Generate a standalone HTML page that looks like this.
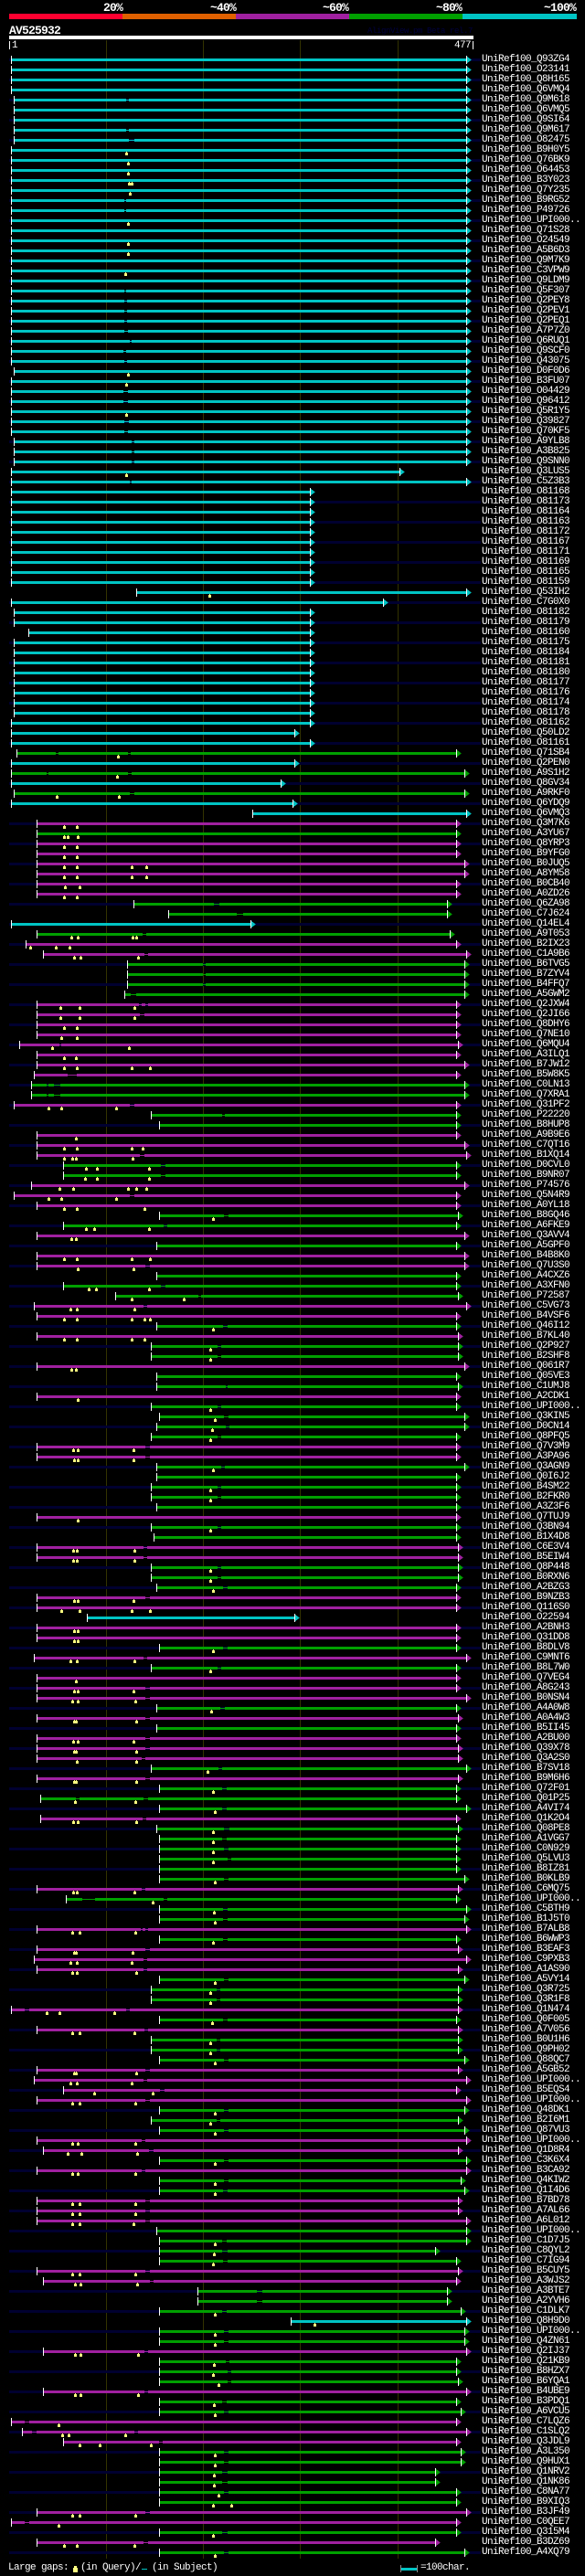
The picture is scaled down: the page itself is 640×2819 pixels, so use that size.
<!DOCTYPE html>
<html><head><meta charset="utf-8"><title>AV525932</title>
<style>
html,body{margin:0;padding:0;background:#000}
body{position:relative;width:640px;height:2819px;overflow:hidden;color:#fff;font-family:"Liberation Mono",monospace}
.t{position:absolute;white-space:pre;line-height:11px}
.b{font-weight:bold;font-size:13px;letter-spacing:-.8px}
.n{font-size:11px;letter-spacing:-.6px}
.r{position:absolute}
#grid{position:absolute;left:10px;top:64px;width:516px;height:2731px;background:linear-gradient(#000030 3px,transparent 3px) 0 0/100% 22px}
#rows{position:absolute;left:0;top:61px;width:640px}
svg{display:block;width:640px;height:11px;overflow:visible;shape-rendering:crispEdges}
path{fill:currentColor}
.c{color:#00c4c4}.g{color:#00a000}.p{color:#a020a0}
path.w{fill:none;stroke:#fff;stroke-width:1}
path.y{fill:#ffff80}
pre{position:absolute;margin:0;left:527px;top:60px;font:11px/11px "Liberation Mono",monospace;letter-spacing:-.6px;color:#fff}
</style></head><body>
<div class="t b" style="left:113px;top:3px">20%</div>
<div class="t b" style="left:230px;top:3px">~40%</div>
<div class="t b" style="left:353px;top:3px">~60%</div>
<div class="t b" style="left:477px;top:3px">~80%</div>
<div class="t b" style="left:595px;top:3px">~100%</div>
<div class="r" style="left:10px;top:15px;width:124px;height:6px;background:#ff0030"></div>
<div class="r" style="left:134px;top:15px;width:124px;height:6px;background:#e06000"></div>
<div class="r" style="left:258px;top:15px;width:124px;height:6px;background:#a020a0"></div>
<div class="r" style="left:382px;top:15px;width:124px;height:6px;background:#00a000"></div>
<div class="r" style="left:506px;top:15px;width:125px;height:6px;background:#00c4c4"></div>
<div class="t b" style="left:10px;top:28px">AV525932</div>
<div class="t" style="left:402px;top:29px;font-size:9px;letter-spacing:-.4px;color:#000040">AlignView.pm Beta rel.7</div>
<div class="r" style="left:10px;top:39px;width:508px;height:4px;background:#fff"></div>
<div class="r" style="left:10px;top:45px;width:1px;height:9px;background:#fff"></div>
<div class="r" style="left:517px;top:45px;width:1px;height:9px;background:#fff"></div>
<div class="t n" style="left:13px;top:45px">1</div>
<div class="t n" style="left:497px;top:45px">477</div>
<div class="r" style="left:116px;top:44px;width:1px;height:2756px;background:#333300"></div>
<div class="r" style="left:222px;top:44px;width:1px;height:2756px;background:#333300"></div>
<div class="r" style="left:328px;top:44px;width:1px;height:2756px;background:#333300"></div>
<div class="r" style="left:435px;top:44px;width:1px;height:2756px;background:#333300"></div>
<div id="grid"></div>
<div id="rows">
<svg class=c><path d="M13 3H511V1l5 3.5-5 3.5V6H13z"/><path class=w d="M12.5 0v9M510.5 0v9"/></svg>
<svg class=c><path d="M13 3H511V1l5 3.5-5 3.5V6H13z"/><path class=w d="M12.5 0v9M510.5 0v9"/></svg>
<svg class=c><path d="M13 3H511V1l5 3.5-5 3.5V6H13z"/><path class=w d="M12.5 0v9M510.5 0v9"/></svg>
<svg class=c><path d="M13 3H511V1l5 3.5-5 3.5V6H13z"/><path class=w d="M12.5 0v9M510.5 0v9"/></svg>
<svg class=c><path d="M16 3H138V4H141V3H511V1l5 3.5-5 3.5V6H141V5H138V6H16z"/><path class=w d="M15.5 0v9M510.5 0v9"/></svg>
<svg class=c><path d="M16 3H511V1l5 3.5-5 3.5V6H16z"/><path class=w d="M15.5 0v9M510.5 0v9"/></svg>
<svg class=c><path d="M16 3H511V1l5 3.5-5 3.5V6H16z"/><path class=w d="M15.5 0v9M510.5 0v9"/></svg>
<svg class=c><path d="M16 3H138V4H141V3H511V1l5 3.5-5 3.5V6H141V5H138V6H16z"/><path class=w d="M15.5 0v9M510.5 0v9"/></svg>
<svg class=c><path d="M16 3H141V4H147V3H511V1l5 3.5-5 3.5V6H147V5H141V6H16z"/><path class=w d="M15.5 0v9M510.5 0v9"/></svg>
<svg class=c><path d="M13 3H511V1l5 3.5-5 3.5V6H13z"/><path class=w d="M12.5 0v9M510.5 0v9"/><path class=y d="M137 10h3V7h-1V6h-1v1h-1z"/></svg>
<svg class=c><path d="M13 3H511V1l5 3.5-5 3.5V6H13z"/><path class=w d="M12.5 0v9M510.5 0v9"/><path class=y d="M139 10h3V7h-1V6h-1v1h-1z"/></svg>
<svg class=c><path d="M13 3H511V1l5 3.5-5 3.5V6H13z"/><path class=w d="M12.5 0v9M510.5 0v9"/><path class=y d="M139 10h3V7h-1V6h-1v1h-1z"/></svg>
<svg class=c><path d="M13 3H511V1l5 3.5-5 3.5V6H13z"/><path class=w d="M12.5 0v9M510.5 0v9"/><path class=y d="M140 10h3V7h-1V6h-1v1h-1zM143 10h3V7h-1V6h-1v1h-1z"/></svg>
<svg class=c><path d="M13 3H511V1l5 3.5-5 3.5V6H13z"/><path class=w d="M12.5 0v9M510.5 0v9"/><path class=y d="M141 10h3V7h-1V6h-1v1h-1z"/></svg>
<svg class=c><path d="M13 3H136V4H138V3H511V1l5 3.5-5 3.5V6H138V5H136V6H13z"/><path class=w d="M12.5 0v9M510.5 0v9"/></svg>
<svg class=c><path d="M13 3H136V4H138V3H511V1l5 3.5-5 3.5V6H138V5H136V6H13z"/><path class=w d="M12.5 0v9M510.5 0v9"/></svg>
<svg class=c><path d="M13 3H511V1l5 3.5-5 3.5V6H13z"/><path class=w d="M12.5 0v9M510.5 0v9"/><path class=y d="M139 10h3V7h-1V6h-1v1h-1z"/></svg>
<svg class=c><path d="M13 3H511V1l5 3.5-5 3.5V6H13z"/><path class=w d="M12.5 0v9M510.5 0v9"/></svg>
<svg class=c><path d="M13 3H511V1l5 3.5-5 3.5V6H13z"/><path class=w d="M12.5 0v9M510.5 0v9"/><path class=y d="M139 10h3V7h-1V6h-1v1h-1z"/></svg>
<svg class=c><path d="M13 3H511V1l5 3.5-5 3.5V6H13z"/><path class=w d="M12.5 0v9M510.5 0v9"/><path class=y d="M139 10h3V7h-1V6h-1v1h-1z"/></svg>
<svg class=c><path d="M13 3H511V1l5 3.5-5 3.5V6H13z"/><path class=w d="M12.5 0v9M510.5 0v9"/></svg>
<svg class=c><path d="M13 3H511V1l5 3.5-5 3.5V6H13z"/><path class=w d="M12.5 0v9M510.5 0v9"/><path class=y d="M136 10h3V7h-1V6h-1v1h-1z"/></svg>
<svg class=c><path d="M13 3H511V1l5 3.5-5 3.5V6H13z"/><path class=w d="M12.5 0v9M510.5 0v9"/></svg>
<svg class=c><path d="M13 3H136V4H138V3H511V1l5 3.5-5 3.5V6H138V5H136V6H13z"/><path class=w d="M12.5 0v9M510.5 0v9"/></svg>
<svg class=c><path d="M13 3H136V4H139V3H511V1l5 3.5-5 3.5V6H139V5H136V6H13z"/><path class=w d="M12.5 0v9M510.5 0v9"/></svg>
<svg class=c><path d="M13 3H136V4H139V3H511V1l5 3.5-5 3.5V6H139V5H136V6H13z"/><path class=w d="M12.5 0v9M510.5 0v9"/></svg>
<svg class=c><path d="M13 3H136V4H139V3H511V1l5 3.5-5 3.5V6H139V5H136V6H13z"/><path class=w d="M12.5 0v9M510.5 0v9"/></svg>
<svg class=c><path d="M13 3H136V4H140V3H511V1l5 3.5-5 3.5V6H140V5H136V6H13z"/><path class=w d="M12.5 0v9M510.5 0v9"/></svg>
<svg class=c><path d="M13 3H142V4H144V3H511V1l5 3.5-5 3.5V6H144V5H142V6H13z"/><path class=w d="M12.5 0v9M510.5 0v9"/></svg>
<svg class=c><path d="M13 3H135V4H138V3H511V1l5 3.5-5 3.5V6H138V5H135V6H13z"/><path class=w d="M12.5 0v9M510.5 0v9"/></svg>
<svg class=c><path d="M13 3H136V4H139V3H511V1l5 3.5-5 3.5V6H139V5H136V6H13z"/><path class=w d="M12.5 0v9M510.5 0v9"/></svg>
<svg class=c><path d="M16 3H511V1l5 3.5-5 3.5V6H16z"/><path class=w d="M15.5 0v9M510.5 0v9"/><path class=y d="M139 10h3V7h-1V6h-1v1h-1z"/></svg>
<svg class=c><path d="M13 3H511V1l5 3.5-5 3.5V6H13z"/><path class=w d="M12.5 0v9M510.5 0v9"/><path class=y d="M137 10h3V7h-1V6h-1v1h-1z"/></svg>
<svg class=c><path d="M13 3H135V4H140V3H511V1l5 3.5-5 3.5V6H140V5H135V6H13z"/><path class=w d="M12.5 0v9M510.5 0v9"/></svg>
<svg class=c><path d="M13 3H135V4H140V3H511V1l5 3.5-5 3.5V6H140V5H135V6H13z"/><path class=w d="M12.5 0v9M510.5 0v9"/></svg>
<svg class=c><path d="M13 3H511V1l5 3.5-5 3.5V6H13z"/><path class=w d="M12.5 0v9M510.5 0v9"/><path class=y d="M137 10h3V7h-1V6h-1v1h-1z"/></svg>
<svg class=c><path d="M13 3H136V4H141V3H511V1l5 3.5-5 3.5V6H141V5H136V6H13z"/><path class=w d="M12.5 0v9M510.5 0v9"/></svg>
<svg class=c><path d="M13 3H136V4H140V3H511V1l5 3.5-5 3.5V6H140V5H136V6H13z"/><path class=w d="M12.5 0v9M510.5 0v9"/></svg>
<svg class=c><path d="M16 3H144V4H147V3H511V1l5 3.5-5 3.5V6H147V5H144V6H16z"/><path class=w d="M15.5 0v9M510.5 0v9"/></svg>
<svg class=c><path d="M16 3H144V4H147V3H511V1l5 3.5-5 3.5V6H147V5H144V6H16z"/><path class=w d="M15.5 0v9M510.5 0v9"/></svg>
<svg class=c><path d="M16 3H144V4H147V3H511V1l5 3.5-5 3.5V6H147V5H144V6H16z"/><path class=w d="M15.5 0v9M510.5 0v9"/></svg>
<svg class=c><path d="M13 3H438V1l5 3.5-5 3.5V6H13z"/><path class=w d="M12.5 0v9M437.5 0v9"/><path class=y d="M137 10h3V7h-1V6h-1v1h-1z"/></svg>
<svg class=c><path d="M13 3H142V4H144V3H511V1l5 3.5-5 3.5V6H144V5H142V6H13z"/><path class=w d="M12.5 0v9M510.5 0v9"/></svg>
<svg class=c><path d="M13 3H340V1l5 3.5-5 3.5V6H13z"/><path class=w d="M12.5 0v9M339.5 0v9"/></svg>
<svg class=c><path d="M13 3H340V1l5 3.5-5 3.5V6H13z"/><path class=w d="M12.5 0v9M339.5 0v9"/></svg>
<svg class=c><path d="M13 3H340V1l5 3.5-5 3.5V6H13z"/><path class=w d="M12.5 0v9M339.5 0v9"/></svg>
<svg class=c><path d="M13 3H340V1l5 3.5-5 3.5V6H13z"/><path class=w d="M12.5 0v9M339.5 0v9"/></svg>
<svg class=c><path d="M13 3H340V1l5 3.5-5 3.5V6H13z"/><path class=w d="M12.5 0v9M339.5 0v9"/></svg>
<svg class=c><path d="M13 3H340V1l5 3.5-5 3.5V6H13z"/><path class=w d="M12.5 0v9M339.5 0v9"/></svg>
<svg class=c><path d="M13 3H340V1l5 3.5-5 3.5V6H13z"/><path class=w d="M12.5 0v9M339.5 0v9"/></svg>
<svg class=c><path d="M13 3H340V1l5 3.5-5 3.5V6H13z"/><path class=w d="M12.5 0v9M339.5 0v9"/></svg>
<svg class=c><path d="M13 3H340V1l5 3.5-5 3.5V6H13z"/><path class=w d="M12.5 0v9M339.5 0v9"/></svg>
<svg class=c><path d="M13 3H340V1l5 3.5-5 3.5V6H13z"/><path class=w d="M12.5 0v9M339.5 0v9"/></svg>
<svg class=c><path d="M150 3H511V1l5 3.5-5 3.5V6H150z"/><path class=w d="M149.5 0v9M510.5 0v9"/><path class=y d="M228 10h3V7h-1V6h-1v1h-1z"/></svg>
<svg class=c><path d="M13 3H420V1l5 3.5-5 3.5V6H13z"/><path class=w d="M12.5 0v9M419.5 0v9"/></svg>
<svg class=c><path d="M16 3H340V1l5 3.5-5 3.5V6H16z"/><path class=w d="M15.5 0v9M339.5 0v9"/></svg>
<svg class=c><path d="M16 3H340V1l5 3.5-5 3.5V6H16z"/><path class=w d="M15.5 0v9M339.5 0v9"/></svg>
<svg class=c><path d="M32 3H340V1l5 3.5-5 3.5V6H32z"/><path class=w d="M31.5 0v9M339.5 0v9"/></svg>
<svg class=c><path d="M16 3H340V1l5 3.5-5 3.5V6H16z"/><path class=w d="M15.5 0v9M339.5 0v9"/></svg>
<svg class=c><path d="M16 3H340V1l5 3.5-5 3.5V6H16z"/><path class=w d="M15.5 0v9M339.5 0v9"/></svg>
<svg class=c><path d="M16 3H340V1l5 3.5-5 3.5V6H16z"/><path class=w d="M15.5 0v9M339.5 0v9"/></svg>
<svg class=c><path d="M16 3H340V1l5 3.5-5 3.5V6H16z"/><path class=w d="M15.5 0v9M339.5 0v9"/></svg>
<svg class=c><path d="M16 3H340V1l5 3.5-5 3.5V6H16z"/><path class=w d="M15.5 0v9M339.5 0v9"/></svg>
<svg class=c><path d="M16 3H340V1l5 3.5-5 3.5V6H16z"/><path class=w d="M15.5 0v9M339.5 0v9"/></svg>
<svg class=c><path d="M16 3H340V1l5 3.5-5 3.5V6H16z"/><path class=w d="M15.5 0v9M339.5 0v9"/></svg>
<svg class=c><path d="M16 3H340V1l5 3.5-5 3.5V6H16z"/><path class=w d="M15.5 0v9M339.5 0v9"/></svg>
<svg class=c><path d="M13 3H340V1l5 3.5-5 3.5V6H13z"/><path class=w d="M12.5 0v9M339.5 0v9"/></svg>
<svg class=c><path d="M13 3H323V1l5 3.5-5 3.5V6H13z"/><path class=w d="M12.5 0v9M322.5 0v9"/></svg>
<svg class=c><path d="M13 3H340V1l5 3.5-5 3.5V6H13z"/><path class=w d="M12.5 0v9M339.5 0v9"/></svg>
<svg class=g><path d="M19 3H61V4H64V3H140V4H143V3H500V1l5 3.5-5 3.5V6H143V5H140V6H64V5H61V6H19z"/><path class=w d="M18.5 0v9M499.5 0v9"/><path class=y d="M128 10h3V7h-1V6h-1v1h-1z"/></svg>
<svg class=c><path d="M13 3H323V1l5 3.5-5 3.5V6H13z"/><path class=w d="M12.5 0v9M322.5 0v9"/></svg>
<svg class=g><path d="M13 3H51V4H53V3H140V4H144V3H509V1l5 3.5-5 3.5V6H144V5H140V6H53V5H51V6H13z"/><path class=w d="M12.5 0v9M508.5 0v9"/><path class=y d="M127 10h3V7h-1V6h-1v1h-1z"/></svg>
<svg class=c><path d="M13 3H308V1l5 3.5-5 3.5V6H13z"/><path class=w d="M12.5 0v9M307.5 0v9"/></svg>
<svg class=g><path d="M16 3H142V4H147V3H509V1l5 3.5-5 3.5V6H147V5H142V6H16z"/><path class=w d="M15.5 0v9M508.5 0v9"/><path class=y d="M61 10h3V7h-1V6h-1v1h-1zM129 10h3V7h-1V6h-1v1h-1z"/></svg>
<svg class=c><path d="M13 3H321V1l5 3.5-5 3.5V6H13z"/><path class=w d="M12.5 0v9M320.5 0v9"/></svg>
<svg class=c><path d="M277 3H511V1l5 3.5-5 3.5V6H277z"/><path class=w d="M276.5 0v9M510.5 0v9"/></svg>
<svg class=p><path d="M41 3H500V1l5 3.5-5 3.5V6H41z"/><path class=w d="M40.5 0v9M499.5 0v9"/><path class=y d="M69 10h3V7h-1V6h-1v1h-1zM83 10h3V7h-1V6h-1v1h-1z"/></svg>
<svg class=g><path d="M41 3H500V1l5 3.5-5 3.5V6H41z"/><path class=w d="M40.5 0v9M499.5 0v9"/><path class=y d="M69 10h3V7h-1V6h-1v1h-1zM73 10h3V7h-1V6h-1v1h-1zM84 10h3V7h-1V6h-1v1h-1z"/></svg>
<svg class=p><path d="M41 3H500V1l5 3.5-5 3.5V6H41z"/><path class=w d="M40.5 0v9M499.5 0v9"/><path class=y d="M69 10h3V7h-1V6h-1v1h-1zM83 10h3V7h-1V6h-1v1h-1z"/></svg>
<svg class=p><path d="M41 3H500V1l5 3.5-5 3.5V6H41z"/><path class=w d="M40.5 0v9M499.5 0v9"/><path class=y d="M69 10h3V7h-1V6h-1v1h-1zM83 10h3V7h-1V6h-1v1h-1z"/></svg>
<svg class=p><path d="M41 3H509V1l5 3.5-5 3.5V6H41z"/><path class=w d="M40.5 0v9M508.5 0v9"/><path class=y d="M69 10h3V7h-1V6h-1v1h-1zM83 10h3V7h-1V6h-1v1h-1zM143 10h3V7h-1V6h-1v1h-1zM159 10h3V7h-1V6h-1v1h-1z"/></svg>
<svg class=p><path d="M41 3H509V1l5 3.5-5 3.5V6H41z"/><path class=w d="M40.5 0v9M508.5 0v9"/><path class=y d="M69 10h3V7h-1V6h-1v1h-1zM83 10h3V7h-1V6h-1v1h-1zM143 10h3V7h-1V6h-1v1h-1zM159 10h3V7h-1V6h-1v1h-1z"/></svg>
<svg class=p><path d="M41 3H500V1l5 3.5-5 3.5V6H41z"/><path class=w d="M40.5 0v9M499.5 0v9"/><path class=y d="M70 10h3V7h-1V6h-1v1h-1zM86 10h3V7h-1V6h-1v1h-1z"/></svg>
<svg class=p><path d="M41 3H500V1l5 3.5-5 3.5V6H41z"/><path class=w d="M40.5 0v9M499.5 0v9"/><path class=y d="M69 10h3V7h-1V6h-1v1h-1zM83 10h3V7h-1V6h-1v1h-1z"/></svg>
<svg class=g><path d="M147 3H234V4H240V3H490V1l5 3.5-5 3.5V6H240V5H234V6H147z"/><path class=w d="M146.5 0v9M489.5 0v9"/></svg>
<svg class=g><path d="M185 3H259V4H266V3H490V1l5 3.5-5 3.5V6H266V5H259V6H185z"/><path class=w d="M184.5 0v9M489.5 0v9"/></svg>
<svg class=c><path d="M13 3H275V1l5 3.5-5 3.5V6H13z"/><path class=w d="M12.5 0v9M274.5 0v9"/></svg>
<svg class=g><path d="M41 3H156V4H160V3H493V1l5 3.5-5 3.5V6H160V5H156V6H41z"/><path class=w d="M40.5 0v9M492.5 0v9"/><path class=y d="M77 10h3V7h-1V6h-1v1h-1zM84 10h3V7h-1V6h-1v1h-1zM144 10h3V7h-1V6h-1v1h-1zM148 10h3V7h-1V6h-1v1h-1z"/></svg>
<svg class=p><path d="M29 3H500V1l5 3.5-5 3.5V6H29z"/><path class=w d="M28.5 0v9M499.5 0v9"/><path class=y d="M32 10h3V7h-1V6h-1v1h-1zM60 10h3V7h-1V6h-1v1h-1zM75 10h3V7h-1V6h-1v1h-1z"/></svg>
<svg class=p><path d="M48 3H158V4H162V3H511V1l5 3.5-5 3.5V6H162V5H158V6H48z"/><path class=w d="M47.5 0v9M510.5 0v9"/><path class=y d="M80 10h3V7h-1V6h-1v1h-1zM87 10h3V7h-1V6h-1v1h-1zM150 10h3V7h-1V6h-1v1h-1z"/></svg>
<svg class=g><path d="M140 3H222V4H225V3H509V1l5 3.5-5 3.5V6H225V5H222V6H140z"/><path class=w d="M139.5 0v9M508.5 0v9"/></svg>
<svg class=g><path d="M140 3H222V4H225V3H509V1l5 3.5-5 3.5V6H225V5H222V6H140z"/><path class=w d="M139.5 0v9M508.5 0v9"/></svg>
<svg class=g><path d="M140 3H222V4H225V3H509V1l5 3.5-5 3.5V6H225V5H222V6H140z"/><path class=w d="M139.5 0v9M508.5 0v9"/></svg>
<svg class=g><path d="M137 3H143V4H149V3H509V1l5 3.5-5 3.5V6H149V5H143V6H137z"/><path class=w d="M136.5 0v9M508.5 0v9"/></svg>
<svg class=p><path d="M41 3H152V4H155V3H159V4H162V3H500V1l5 3.5-5 3.5V6H162V5H159V6H155V5H152V6H41z"/><path class=w d="M40.5 0v9M499.5 0v9"/><path class=y d="M65 10h3V7h-1V6h-1v1h-1zM86 10h3V7h-1V6h-1v1h-1zM146 10h3V7h-1V6h-1v1h-1z"/></svg>
<svg class=p><path d="M41 3H153V4H158V3H500V1l5 3.5-5 3.5V6H158V5H153V6H41z"/><path class=w d="M40.5 0v9M499.5 0v9"/><path class=y d="M65 10h3V7h-1V6h-1v1h-1zM86 10h3V7h-1V6h-1v1h-1zM146 10h3V7h-1V6h-1v1h-1z"/></svg>
<svg class=p><path d="M41 3H500V1l5 3.5-5 3.5V6H41z"/><path class=w d="M40.5 0v9M499.5 0v9"/><path class=y d="M69 10h3V7h-1V6h-1v1h-1zM83 10h3V7h-1V6h-1v1h-1z"/></svg>
<svg class=p><path d="M41 3H500V1l5 3.5-5 3.5V6H41z"/><path class=w d="M40.5 0v9M499.5 0v9"/><path class=y d="M66 10h3V7h-1V6h-1v1h-1zM83 10h3V7h-1V6h-1v1h-1z"/></svg>
<svg class=p><path d="M22 3H65V4H67V3H502V1l5 3.5-5 3.5V6H67V5H65V6H22z"/><path class=w d="M21.5 0v9M501.5 0v9"/><path class=y d="M56 10h3V7h-1V6h-1v1h-1zM140 10h3V7h-1V6h-1v1h-1z"/></svg>
<svg class=p><path d="M41 3H500V1l5 3.5-5 3.5V6H41z"/><path class=w d="M40.5 0v9M499.5 0v9"/><path class=y d="M69 10h3V7h-1V6h-1v1h-1zM82 10h3V7h-1V6h-1v1h-1z"/></svg>
<svg class=p><path d="M41 3H509V1l5 3.5-5 3.5V6H41z"/><path class=w d="M40.5 0v9M508.5 0v9"/><path class=y d="M69 10h3V7h-1V6h-1v1h-1zM83 10h3V7h-1V6h-1v1h-1zM143 10h3V7h-1V6h-1v1h-1zM163 10h3V7h-1V6h-1v1h-1z"/></svg>
<svg class=p><path d="M38 3H74V4H84V3H500V1l5 3.5-5 3.5V6H84V5H74V6H38z"/><path class=w d="M37.5 0v9M499.5 0v9"/></svg>
<svg class=g><path d="M35 3H51V4H53V3H59V4H66V3H509V1l5 3.5-5 3.5V6H66V5H59V6H53V5H51V6H35z"/><path class=w d="M34.5 0v9M508.5 0v9"/></svg>
<svg class=g><path d="M35 3H51V4H53V3H59V4H66V3H509V1l5 3.5-5 3.5V6H66V5H59V6H53V5H51V6H35z"/><path class=w d="M34.5 0v9M508.5 0v9"/></svg>
<svg class=p><path d="M16 3H142V4H147V3H500V1l5 3.5-5 3.5V6H147V5H142V6H16z"/><path class=w d="M15.5 0v9M499.5 0v9"/><path class=y d="M52 10h3V7h-1V6h-1v1h-1zM66 10h3V7h-1V6h-1v1h-1zM126 10h3V7h-1V6h-1v1h-1z"/></svg>
<svg class=g><path d="M166 3H243V4H246V3H500V1l5 3.5-5 3.5V6H246V5H243V6H166z"/><path class=w d="M165.5 0v9M499.5 0v9"/></svg>
<svg class=g><path d="M175 3H500V1l5 3.5-5 3.5V6H175z"/><path class=w d="M174.5 0v9M499.5 0v9"/></svg>
<svg class=p><path d="M41 3H500V1l5 3.5-5 3.5V6H41z"/><path class=w d="M40.5 0v9M499.5 0v9"/><path class=y d="M82 10h3V7h-1V6h-1v1h-1z"/></svg>
<svg class=p><path d="M41 3H509V1l5 3.5-5 3.5V6H41z"/><path class=w d="M40.5 0v9M508.5 0v9"/><path class=y d="M69 10h3V7h-1V6h-1v1h-1zM83 10h3V7h-1V6h-1v1h-1zM143 10h3V7h-1V6h-1v1h-1zM155 10h3V7h-1V6h-1v1h-1z"/></svg>
<svg class=p><path d="M41 3H153V4H158V3H511V1l5 3.5-5 3.5V6H158V5H153V6H41z"/><path class=w d="M40.5 0v9M510.5 0v9"/><path class=y d="M69 10h3V7h-1V6h-1v1h-1zM78 10h3V7h-1V6h-1v1h-1zM82 10h3V7h-1V6h-1v1h-1zM144 10h3V7h-1V6h-1v1h-1z"/></svg>
<svg class=g><path d="M70 3H176V4H181V3H500V1l5 3.5-5 3.5V6H181V5H176V6H70z"/><path class=w d="M69.5 0v9M499.5 0v9"/><path class=y d="M93 10h3V7h-1V6h-1v1h-1zM105 10h3V7h-1V6h-1v1h-1zM162 10h3V7h-1V6h-1v1h-1z"/></svg>
<svg class=g><path d="M70 3H176V4H181V3H500V1l5 3.5-5 3.5V6H181V5H176V6H70z"/><path class=w d="M69.5 0v9M499.5 0v9"/><path class=y d="M92 10h3V7h-1V6h-1v1h-1zM105 10h3V7h-1V6h-1v1h-1zM162 10h3V7h-1V6h-1v1h-1z"/></svg>
<svg class=p><path d="M35 3H509V1l5 3.5-5 3.5V6H35z"/><path class=w d="M34.5 0v9M508.5 0v9"/><path class=y d="M64 10h3V7h-1V6h-1v1h-1zM79 10h3V7h-1V6h-1v1h-1zM139 10h3V7h-1V6h-1v1h-1zM148 10h3V7h-1V6h-1v1h-1zM159 10h3V7h-1V6h-1v1h-1z"/></svg>
<svg class=p><path d="M16 3H142V4H147V3H500V1l5 3.5-5 3.5V6H147V5H142V6H16z"/><path class=w d="M15.5 0v9M499.5 0v9"/><path class=y d="M52 10h3V7h-1V6h-1v1h-1zM66 10h3V7h-1V6h-1v1h-1zM126 10h3V7h-1V6h-1v1h-1z"/></svg>
<svg class=p><path d="M41 3H500V1l5 3.5-5 3.5V6H41z"/><path class=w d="M40.5 0v9M499.5 0v9"/><path class=y d="M69 10h3V7h-1V6h-1v1h-1zM83 10h3V7h-1V6h-1v1h-1zM157 10h3V7h-1V6h-1v1h-1z"/></svg>
<svg class=g><path d="M175 3H245V4H250V3H502V1l5 3.5-5 3.5V6H250V5H245V6H175z"/><path class=w d="M174.5 0v9M501.5 0v9"/><path class=y d="M232 10h3V7h-1V6h-1v1h-1z"/></svg>
<svg class=g><path d="M70 3H179V4H183V3H500V1l5 3.5-5 3.5V6H183V5H179V6H70z"/><path class=w d="M69.5 0v9M499.5 0v9"/><path class=y d="M93 10h3V7h-1V6h-1v1h-1zM102 10h3V7h-1V6h-1v1h-1zM162 10h3V7h-1V6h-1v1h-1z"/></svg>
<svg class=p><path d="M41 3H509V1l5 3.5-5 3.5V6H41z"/><path class=w d="M40.5 0v9M508.5 0v9"/><path class=y d="M77 10h3V7h-1V6h-1v1h-1zM82 10h3V7h-1V6h-1v1h-1z"/></svg>
<svg class=g><path d="M172 3H500V1l5 3.5-5 3.5V6H172z"/><path class=w d="M171.5 0v9M499.5 0v9"/></svg>
<svg class=p><path d="M41 3H509V1l5 3.5-5 3.5V6H41z"/><path class=w d="M40.5 0v9M508.5 0v9"/><path class=y d="M69 10h3V7h-1V6h-1v1h-1zM83 10h3V7h-1V6h-1v1h-1zM143 10h3V7h-1V6h-1v1h-1zM163 10h3V7h-1V6h-1v1h-1z"/></svg>
<svg class=p><path d="M41 3H159V4H164V3H509V1l5 3.5-5 3.5V6H164V5H159V6H41z"/><path class=w d="M40.5 0v9M508.5 0v9"/><path class=y d="M84 10h3V7h-1V6h-1v1h-1zM145 10h3V7h-1V6h-1v1h-1z"/></svg>
<svg class=g><path d="M172 3H500V1l5 3.5-5 3.5V6H172z"/><path class=w d="M171.5 0v9M499.5 0v9"/></svg>
<svg class=g><path d="M70 3H176V4H181V3H500V1l5 3.5-5 3.5V6H181V5H176V6H70z"/><path class=w d="M69.5 0v9M499.5 0v9"/><path class=y d="M96 10h3V7h-1V6h-1v1h-1zM104 10h3V7h-1V6h-1v1h-1zM162 10h3V7h-1V6h-1v1h-1z"/></svg>
<svg class=g><path d="M127 3H217V4H220V3H502V1l5 3.5-5 3.5V6H220V5H217V6H127z"/><path class=w d="M126.5 0v9M501.5 0v9"/><path class=y d="M143 10h3V7h-1V6h-1v1h-1zM200 10h3V7h-1V6h-1v1h-1z"/></svg>
<svg class=p><path d="M38 3H157V4H161V3H511V1l5 3.5-5 3.5V6H161V5H157V6H38z"/><path class=w d="M37.5 0v9M510.5 0v9"/><path class=y d="M76 10h3V7h-1V6h-1v1h-1zM83 10h3V7h-1V6h-1v1h-1zM146 10h3V7h-1V6h-1v1h-1z"/></svg>
<svg class=p><path d="M41 3H500V1l5 3.5-5 3.5V6H41z"/><path class=w d="M40.5 0v9M499.5 0v9"/><path class=y d="M69 10h3V7h-1V6h-1v1h-1zM83 10h3V7h-1V6h-1v1h-1zM143 10h3V7h-1V6h-1v1h-1zM157 10h3V7h-1V6h-1v1h-1zM163 10h3V7h-1V6h-1v1h-1z"/></svg>
<svg class=g><path d="M172 3H244V4H249V3H500V1l5 3.5-5 3.5V6H249V5H244V6H172z"/><path class=w d="M171.5 0v9M499.5 0v9"/><path class=y d="M232 10h3V7h-1V6h-1v1h-1z"/></svg>
<svg class=p><path d="M41 3H502V1l5 3.5-5 3.5V6H41z"/><path class=w d="M40.5 0v9M501.5 0v9"/><path class=y d="M69 10h3V7h-1V6h-1v1h-1zM83 10h3V7h-1V6h-1v1h-1zM143 10h3V7h-1V6h-1v1h-1zM157 10h3V7h-1V6h-1v1h-1z"/></svg>
<svg class=g><path d="M166 3H238V4H242V3H502V1l5 3.5-5 3.5V6H242V5H238V6H166z"/><path class=w d="M165.5 0v9M501.5 0v9"/><path class=y d="M229 10h3V7h-1V6h-1v1h-1z"/></svg>
<svg class=g><path d="M166 3H238V4H242V3H502V1l5 3.5-5 3.5V6H242V5H238V6H166z"/><path class=w d="M165.5 0v9M501.5 0v9"/><path class=y d="M229 10h3V7h-1V6h-1v1h-1z"/></svg>
<svg class=p><path d="M41 3H509V1l5 3.5-5 3.5V6H41z"/><path class=w d="M40.5 0v9M508.5 0v9"/><path class=y d="M77 10h3V7h-1V6h-1v1h-1zM82 10h3V7h-1V6h-1v1h-1z"/></svg>
<svg class=g><path d="M172 3H500V1l5 3.5-5 3.5V6H172z"/><path class=w d="M171.5 0v9M499.5 0v9"/></svg>
<svg class=g><path d="M172 3H247V4H249V3H502V1l5 3.5-5 3.5V6H249V5H247V6H172z"/><path class=w d="M171.5 0v9M501.5 0v9"/></svg>
<svg class=p><path d="M41 3H500V1l5 3.5-5 3.5V6H41z"/><path class=w d="M40.5 0v9M499.5 0v9"/><path class=y d="M84 10h3V7h-1V6h-1v1h-1z"/></svg>
<svg class=g><path d="M166 3H238V4H242V3H500V1l5 3.5-5 3.5V6H242V5H238V6H166z"/><path class=w d="M165.5 0v9M499.5 0v9"/><path class=y d="M229 10h3V7h-1V6h-1v1h-1z"/></svg>
<svg class=g><path d="M175 3H245V4H250V3H509V1l5 3.5-5 3.5V6H250V5H245V6H175z"/><path class=w d="M174.5 0v9M508.5 0v9"/><path class=y d="M234 10h3V7h-1V6h-1v1h-1z"/></svg>
<svg class=g><path d="M172 3H247V4H251V3H509V1l5 3.5-5 3.5V6H251V5H247V6H172z"/><path class=w d="M171.5 0v9M508.5 0v9"/><path class=y d="M231 10h3V7h-1V6h-1v1h-1z"/></svg>
<svg class=g><path d="M166 3H238V4H242V3H500V1l5 3.5-5 3.5V6H242V5H238V6H166z"/><path class=w d="M165.5 0v9M499.5 0v9"/><path class=y d="M229 10h3V7h-1V6h-1v1h-1z"/></svg>
<svg class=p><path d="M41 3H159V4H164V3H500V1l5 3.5-5 3.5V6H164V5H159V6H41z"/><path class=w d="M40.5 0v9M499.5 0v9"/><path class=y d="M79 10h3V7h-1V6h-1v1h-1zM84 10h3V7h-1V6h-1v1h-1zM145 10h3V7h-1V6h-1v1h-1z"/></svg>
<svg class=p><path d="M41 3H159V4H164V3H500V1l5 3.5-5 3.5V6H164V5H159V6H41z"/><path class=w d="M40.5 0v9M499.5 0v9"/><path class=y d="M80 10h3V7h-1V6h-1v1h-1zM84 10h3V7h-1V6h-1v1h-1zM145 10h3V7h-1V6h-1v1h-1z"/></svg>
<svg class=g><path d="M172 3H242V4H246V3H509V1l5 3.5-5 3.5V6H246V5H242V6H172z"/><path class=w d="M171.5 0v9M508.5 0v9"/><path class=y d="M232 10h3V7h-1V6h-1v1h-1z"/></svg>
<svg class=g><path d="M172 3H500V1l5 3.5-5 3.5V6H172z"/><path class=w d="M171.5 0v9M499.5 0v9"/></svg>
<svg class=g><path d="M166 3H238V4H242V3H500V1l5 3.5-5 3.5V6H242V5H238V6H166z"/><path class=w d="M165.5 0v9M499.5 0v9"/><path class=y d="M229 10h3V7h-1V6h-1v1h-1z"/></svg>
<svg class=g><path d="M166 3H238V4H242V3H500V1l5 3.5-5 3.5V6H242V5H238V6H166z"/><path class=w d="M165.5 0v9M499.5 0v9"/><path class=y d="M229 10h3V7h-1V6h-1v1h-1z"/></svg>
<svg class=g><path d="M172 3H500V1l5 3.5-5 3.5V6H172z"/><path class=w d="M171.5 0v9M499.5 0v9"/></svg>
<svg class=p><path d="M41 3H500V1l5 3.5-5 3.5V6H41z"/><path class=w d="M40.5 0v9M499.5 0v9"/><path class=y d="M84 10h3V7h-1V6h-1v1h-1z"/></svg>
<svg class=g><path d="M166 3H238V4H242V3H500V1l5 3.5-5 3.5V6H242V5H238V6H166z"/><path class=w d="M165.5 0v9M499.5 0v9"/><path class=y d="M229 10h3V7h-1V6h-1v1h-1z"/></svg>
<svg class=g><path d="M169 3H500V1l5 3.5-5 3.5V6H169z"/><path class=w d="M168.5 0v9M499.5 0v9"/></svg>
<svg class=p><path d="M41 3H157V4H161V3H502V1l5 3.5-5 3.5V6H161V5H157V6H41z"/><path class=w d="M40.5 0v9M501.5 0v9"/><path class=y d="M79 10h3V7h-1V6h-1v1h-1zM83 10h3V7h-1V6h-1v1h-1zM146 10h3V7h-1V6h-1v1h-1z"/></svg>
<svg class=p><path d="M41 3H157V4H161V3H502V1l5 3.5-5 3.5V6H161V5H157V6H41z"/><path class=w d="M40.5 0v9M501.5 0v9"/><path class=y d="M79 10h3V7h-1V6h-1v1h-1zM83 10h3V7h-1V6h-1v1h-1zM146 10h3V7h-1V6h-1v1h-1z"/></svg>
<svg class=g><path d="M166 3H238V4H242V3H502V1l5 3.5-5 3.5V6H242V5H238V6H166z"/><path class=w d="M165.5 0v9M501.5 0v9"/><path class=y d="M229 10h3V7h-1V6h-1v1h-1z"/></svg>
<svg class=g><path d="M166 3H238V4H242V3H502V1l5 3.5-5 3.5V6H242V5H238V6H166z"/><path class=w d="M165.5 0v9M501.5 0v9"/><path class=y d="M229 10h3V7h-1V6h-1v1h-1z"/></svg>
<svg class=g><path d="M172 3H244V4H249V3H500V1l5 3.5-5 3.5V6H249V5H244V6H172z"/><path class=w d="M171.5 0v9M499.5 0v9"/><path class=y d="M232 10h3V7h-1V6h-1v1h-1z"/></svg>
<svg class=p><path d="M41 3H159V4H164V3H500V1l5 3.5-5 3.5V6H164V5H159V6H41z"/><path class=w d="M40.5 0v9M499.5 0v9"/><path class=y d="M80 10h3V7h-1V6h-1v1h-1zM84 10h3V7h-1V6h-1v1h-1zM145 10h3V7h-1V6h-1v1h-1z"/></svg>
<svg class=p><path d="M41 3H500V1l5 3.5-5 3.5V6H41z"/><path class=w d="M40.5 0v9M499.5 0v9"/><path class=y d="M66 10h3V7h-1V6h-1v1h-1zM86 10h3V7h-1V6h-1v1h-1zM143 10h3V7h-1V6h-1v1h-1zM163 10h3V7h-1V6h-1v1h-1z"/></svg>
<svg class=c><path d="M96 3H323V1l5 3.5-5 3.5V6H96z"/><path class=w d="M95.5 0v9M322.5 0v9"/></svg>
<svg class=p><path d="M41 3H500V1l5 3.5-5 3.5V6H41z"/><path class=w d="M40.5 0v9M499.5 0v9"/><path class=y d="M80 10h3V7h-1V6h-1v1h-1zM84 10h3V7h-1V6h-1v1h-1z"/></svg>
<svg class=p><path d="M41 3H500V1l5 3.5-5 3.5V6H41z"/><path class=w d="M40.5 0v9M499.5 0v9"/><path class=y d="M80 10h3V7h-1V6h-1v1h-1zM84 10h3V7h-1V6h-1v1h-1z"/></svg>
<svg class=g><path d="M175 3H244V4H249V3H500V1l5 3.5-5 3.5V6H249V5H244V6H175z"/><path class=w d="M174.5 0v9M499.5 0v9"/><path class=y d="M232 10h3V7h-1V6h-1v1h-1z"/></svg>
<svg class=p><path d="M38 3H157V4H161V3H511V1l5 3.5-5 3.5V6H161V5H157V6H38z"/><path class=w d="M37.5 0v9M510.5 0v9"/><path class=y d="M76 10h3V7h-1V6h-1v1h-1zM83 10h3V7h-1V6h-1v1h-1zM146 10h3V7h-1V6h-1v1h-1z"/></svg>
<svg class=g><path d="M166 3H238V4H242V3H500V1l5 3.5-5 3.5V6H242V5H238V6H166z"/><path class=w d="M165.5 0v9M499.5 0v9"/><path class=y d="M229 10h3V7h-1V6h-1v1h-1z"/></svg>
<svg class=p><path d="M41 3H500V1l5 3.5-5 3.5V6H41z"/><path class=w d="M40.5 0v9M499.5 0v9"/><path class=y d="M82 10h3V7h-1V6h-1v1h-1z"/></svg>
<svg class=p><path d="M41 3H159V4H164V3H500V1l5 3.5-5 3.5V6H164V5H159V6H41z"/><path class=w d="M40.5 0v9M499.5 0v9"/><path class=y d="M80 10h3V7h-1V6h-1v1h-1zM84 10h3V7h-1V6h-1v1h-1zM145 10h3V7h-1V6h-1v1h-1z"/></svg>
<svg class=p><path d="M41 3H159V4H164V3H511V1l5 3.5-5 3.5V6H164V5H159V6H41z"/><path class=w d="M40.5 0v9M510.5 0v9"/><path class=y d="M78 10h3V7h-1V6h-1v1h-1zM84 10h3V7h-1V6h-1v1h-1zM147 10h3V7h-1V6h-1v1h-1z"/></svg>
<svg class=g><path d="M172 3H241V4H246V3H500V1l5 3.5-5 3.5V6H246V5H241V6H172z"/><path class=w d="M171.5 0v9M499.5 0v9"/><path class=y d="M230 10h3V7h-1V6h-1v1h-1z"/></svg>
<svg class=p><path d="M41 3H159V4H164V3H502V1l5 3.5-5 3.5V6H164V5H159V6H41z"/><path class=w d="M40.5 0v9M501.5 0v9"/><path class=y d="M80 10h3V7h-1V6h-1v1h-1zM82 10h3V7h-1V6h-1v1h-1zM148 10h3V7h-1V6h-1v1h-1z"/></svg>
<svg class=g><path d="M172 3H500V1l5 3.5-5 3.5V6H172z"/><path class=w d="M171.5 0v9M499.5 0v9"/></svg>
<svg class=p><path d="M41 3H159V4H164V3H500V1l5 3.5-5 3.5V6H164V5H159V6H41z"/><path class=w d="M40.5 0v9M499.5 0v9"/><path class=y d="M79 10h3V7h-1V6h-1v1h-1zM84 10h3V7h-1V6h-1v1h-1zM145 10h3V7h-1V6h-1v1h-1z"/></svg>
<svg class=p><path d="M41 3H159V4H164V3H502V1l5 3.5-5 3.5V6H164V5H159V6H41z"/><path class=w d="M40.5 0v9M501.5 0v9"/><path class=y d="M80 10h3V7h-1V6h-1v1h-1zM82 10h3V7h-1V6h-1v1h-1zM148 10h3V7h-1V6h-1v1h-1z"/></svg>
<svg class=p><path d="M41 3H155V4H159V3H502V1l5 3.5-5 3.5V6H159V5H155V6H41z"/><path class=w d="M40.5 0v9M501.5 0v9"/><path class=y d="M83 10h3V7h-1V6h-1v1h-1zM148 10h3V7h-1V6h-1v1h-1z"/></svg>
<svg class=g><path d="M166 3H239V4H243V3H511V1l5 3.5-5 3.5V6H243V5H239V6H166z"/><path class=w d="M165.5 0v9M510.5 0v9"/><path class=y d="M226 10h3V7h-1V6h-1v1h-1z"/></svg>
<svg class=p><path d="M41 3H159V4H164V3H502V1l5 3.5-5 3.5V6H164V5H159V6H41z"/><path class=w d="M40.5 0v9M501.5 0v9"/><path class=y d="M80 10h3V7h-1V6h-1v1h-1zM82 10h3V7h-1V6h-1v1h-1zM148 10h3V7h-1V6h-1v1h-1z"/></svg>
<svg class=g><path d="M175 3H243V4H248V3H500V1l5 3.5-5 3.5V6H248V5H243V6H175z"/><path class=w d="M174.5 0v9M499.5 0v9"/><path class=y d="M232 10h3V7h-1V6h-1v1h-1z"/></svg>
<svg class=g><path d="M45 3H83V4H87V3H157V4H162V3H500V1l5 3.5-5 3.5V6H162V5H157V6H87V5H83V6H45z"/><path class=w d="M44.5 0v9M499.5 0v9"/><path class=y d="M81 10h3V7h-1V6h-1v1h-1zM147 10h3V7h-1V6h-1v1h-1z"/></svg>
<svg class=g><path d="M175 3H243V4H248V3H511V1l5 3.5-5 3.5V6H248V5H243V6H175z"/><path class=w d="M174.5 0v9M510.5 0v9"/><path class=y d="M234 10h3V7h-1V6h-1v1h-1z"/></svg>
<svg class=p><path d="M45 3H156V4H160V3H500V1l5 3.5-5 3.5V6H160V5H156V6H45z"/><path class=w d="M44.5 0v9M499.5 0v9"/><path class=y d="M79 10h3V7h-1V6h-1v1h-1zM84 10h3V7h-1V6h-1v1h-1zM148 10h3V7h-1V6h-1v1h-1z"/></svg>
<svg class=g><path d="M172 3H245V4H251V3H502V1l5 3.5-5 3.5V6H251V5H245V6H172z"/><path class=w d="M171.5 0v9M501.5 0v9"/><path class=y d="M232 10h3V7h-1V6h-1v1h-1z"/></svg>
<svg class=g><path d="M175 3H243V4H248V3H500V1l5 3.5-5 3.5V6H248V5H243V6H175z"/><path class=w d="M174.5 0v9M499.5 0v9"/><path class=y d="M232 10h3V7h-1V6h-1v1h-1z"/></svg>
<svg class=g><path d="M175 3H245V4H250V3H500V1l5 3.5-5 3.5V6H250V5H245V6H175z"/><path class=w d="M174.5 0v9M499.5 0v9"/><path class=y d="M232 10h3V7h-1V6h-1v1h-1z"/></svg>
<svg class=g><path d="M175 3H249V4H253V3H500V1l5 3.5-5 3.5V6H253V5H249V6H175z"/><path class=w d="M174.5 0v9M499.5 0v9"/><path class=y d="M232 10h3V7h-1V6h-1v1h-1z"/></svg>
<svg class=g><path d="M175 3H500V1l5 3.5-5 3.5V6H175z"/><path class=w d="M174.5 0v9M499.5 0v9"/></svg>
<svg class=g><path d="M175 3H245V4H250V3H509V1l5 3.5-5 3.5V6H250V5H245V6H175z"/><path class=w d="M174.5 0v9M508.5 0v9"/><path class=y d="M234 10h3V7h-1V6h-1v1h-1z"/></svg>
<svg class=p><path d="M41 3H155V4H159V3H502V1l5 3.5-5 3.5V6H159V5H155V6H41z"/><path class=w d="M40.5 0v9M501.5 0v9"/><path class=y d="M79 10h3V7h-1V6h-1v1h-1zM83 10h3V7h-1V6h-1v1h-1zM146 10h3V7h-1V6h-1v1h-1z"/></svg>
<svg class=g><path d="M73 3H90V4H104V3H179V4H183V3H500V1l5 3.5-5 3.5V6H183V5H179V6H104V5H90V6H73z"/><path class=w d="M72.5 0v9M499.5 0v9"/><path class=y d="M166 10h3V7h-1V6h-1v1h-1z"/></svg>
<svg class=g><path d="M175 3H244V4H249V3H511V1l5 3.5-5 3.5V6H249V5H244V6H175z"/><path class=w d="M174.5 0v9M510.5 0v9"/><path class=y d="M233 10h3V7h-1V6h-1v1h-1z"/></svg>
<svg class=g><path d="M175 3H244V4H249V3H509V1l5 3.5-5 3.5V6H249V5H244V6H175z"/><path class=w d="M174.5 0v9M508.5 0v9"/><path class=y d="M234 10h3V7h-1V6h-1v1h-1z"/></svg>
<svg class=p><path d="M41 3H154V4H156V3H159V4H162V3H511V1l5 3.5-5 3.5V6H162V5H159V6H156V5H154V6H41z"/><path class=w d="M40.5 0v9M510.5 0v9"/><path class=y d="M78 10h3V7h-1V6h-1v1h-1zM86 10h3V7h-1V6h-1v1h-1zM147 10h3V7h-1V6h-1v1h-1z"/></svg>
<svg class=g><path d="M175 3H244V4H249V3H500V1l5 3.5-5 3.5V6H249V5H244V6H175z"/><path class=w d="M174.5 0v9M499.5 0v9"/><path class=y d="M232 10h3V7h-1V6h-1v1h-1z"/></svg>
<svg class=p><path d="M41 3H159V4H164V3H502V1l5 3.5-5 3.5V6H164V5H159V6H41z"/><path class=w d="M40.5 0v9M501.5 0v9"/><path class=y d="M80 10h3V7h-1V6h-1v1h-1zM82 10h3V7h-1V6h-1v1h-1zM144 10h3V7h-1V6h-1v1h-1z"/></svg>
<svg class=p><path d="M38 3H157V4H161V3H511V1l5 3.5-5 3.5V6H161V5H157V6H38z"/><path class=w d="M37.5 0v9M510.5 0v9"/><path class=y d="M76 10h3V7h-1V6h-1v1h-1zM83 10h3V7h-1V6h-1v1h-1zM143 10h3V7h-1V6h-1v1h-1z"/></svg>
<svg class=p><path d="M41 3H157V4H161V3H502V1l5 3.5-5 3.5V6H161V5H157V6H41z"/><path class=w d="M40.5 0v9M501.5 0v9"/><path class=y d="M78 10h3V7h-1V6h-1v1h-1zM83 10h3V7h-1V6h-1v1h-1zM148 10h3V7h-1V6h-1v1h-1z"/></svg>
<svg class=g><path d="M175 3H245V4H250V3H509V1l5 3.5-5 3.5V6H250V5H245V6H175z"/><path class=w d="M174.5 0v9M508.5 0v9"/><path class=y d="M234 10h3V7h-1V6h-1v1h-1z"/></svg>
<svg class=g><path d="M166 3H237V4H241V3H502V1l5 3.5-5 3.5V6H241V5H237V6H166z"/><path class=w d="M165.5 0v9M501.5 0v9"/><path class=y d="M229 10h3V7h-1V6h-1v1h-1z"/></svg>
<svg class=g><path d="M166 3H237V4H241V3H502V1l5 3.5-5 3.5V6H241V5H237V6H166z"/><path class=w d="M165.5 0v9M501.5 0v9"/><path class=y d="M229 10h3V7h-1V6h-1v1h-1z"/></svg>
<svg class=p><path d="M13 3H27V4H32V3H138V4H142V3H502V1l5 3.5-5 3.5V6H142V5H138V6H32V5H27V6H13z"/><path class=w d="M12.5 0v9M501.5 0v9"/><path class=y d="M50 10h3V7h-1V6h-1v1h-1zM64 10h3V7h-1V6h-1v1h-1zM124 10h3V7h-1V6h-1v1h-1z"/></svg>
<svg class=g><path d="M175 3H244V4H249V3H500V1l5 3.5-5 3.5V6H249V5H244V6H175z"/><path class=w d="M174.5 0v9M499.5 0v9"/><path class=y d="M231 10h3V7h-1V6h-1v1h-1z"/></svg>
<svg class=p><path d="M41 3H158V4H162V3H502V1l5 3.5-5 3.5V6H162V5H158V6H41z"/><path class=w d="M40.5 0v9M501.5 0v9"/><path class=y d="M78 10h3V7h-1V6h-1v1h-1zM86 10h3V7h-1V6h-1v1h-1zM146 10h3V7h-1V6h-1v1h-1z"/></svg>
<svg class=g><path d="M166 3H237V4H241V3H502V1l5 3.5-5 3.5V6H241V5H237V6H166z"/><path class=w d="M165.5 0v9M501.5 0v9"/><path class=y d="M229 10h3V7h-1V6h-1v1h-1z"/></svg>
<svg class=g><path d="M166 3H237V4H241V3H502V1l5 3.5-5 3.5V6H241V5H237V6H166z"/><path class=w d="M165.5 0v9M501.5 0v9"/><path class=y d="M229 10h3V7h-1V6h-1v1h-1z"/></svg>
<svg class=g><path d="M175 3H245V4H250V3H509V1l5 3.5-5 3.5V6H250V5H245V6H175z"/><path class=w d="M174.5 0v9M508.5 0v9"/><path class=y d="M234 10h3V7h-1V6h-1v1h-1z"/></svg>
<svg class=p><path d="M41 3H159V4H164V3H502V1l5 3.5-5 3.5V6H164V5H159V6H41z"/><path class=w d="M40.5 0v9M501.5 0v9"/><path class=y d="M80 10h3V7h-1V6h-1v1h-1zM82 10h3V7h-1V6h-1v1h-1zM148 10h3V7h-1V6h-1v1h-1z"/></svg>
<svg class=p><path d="M38 3H157V4H161V3H511V1l5 3.5-5 3.5V6H161V5H157V6H38z"/><path class=w d="M37.5 0v9M510.5 0v9"/><path class=y d="M76 10h3V7h-1V6h-1v1h-1zM83 10h3V7h-1V6h-1v1h-1zM143 10h3V7h-1V6h-1v1h-1z"/></svg>
<svg class=p><path d="M70 3H175V4H180V3H500V1l5 3.5-5 3.5V6H180V5H175V6H70z"/><path class=w d="M69.5 0v9M499.5 0v9"/><path class=y d="M102 10h3V7h-1V6h-1v1h-1zM166 10h3V7h-1V6h-1v1h-1z"/></svg>
<svg class=p><path d="M41 3H159V4H164V3H511V1l5 3.5-5 3.5V6H164V5H159V6H41z"/><path class=w d="M40.5 0v9M510.5 0v9"/><path class=y d="M78 10h3V7h-1V6h-1v1h-1zM86 10h3V7h-1V6h-1v1h-1zM147 10h3V7h-1V6h-1v1h-1z"/></svg>
<svg class=g><path d="M175 3H245V4H250V3H509V1l5 3.5-5 3.5V6H250V5H245V6H175z"/><path class=w d="M174.5 0v9M508.5 0v9"/><path class=y d="M234 10h3V7h-1V6h-1v1h-1z"/></svg>
<svg class=g><path d="M166 3H237V4H241V3H502V1l5 3.5-5 3.5V6H241V5H237V6H166z"/><path class=w d="M165.5 0v9M501.5 0v9"/><path class=y d="M229 10h3V7h-1V6h-1v1h-1z"/></svg>
<svg class=g><path d="M175 3H245V4H250V3H509V1l5 3.5-5 3.5V6H250V5H245V6H175z"/><path class=w d="M174.5 0v9M508.5 0v9"/><path class=y d="M234 10h3V7h-1V6h-1v1h-1z"/></svg>
<svg class=p><path d="M41 3H155V4H159V3H511V1l5 3.5-5 3.5V6H159V5H155V6H41z"/><path class=w d="M40.5 0v9M510.5 0v9"/><path class=y d="M78 10h3V7h-1V6h-1v1h-1zM84 10h3V7h-1V6h-1v1h-1zM147 10h3V7h-1V6h-1v1h-1z"/></svg>
<svg class=p><path d="M48 3H163V4H168V3H502V1l5 3.5-5 3.5V6H168V5H163V6H48z"/><path class=w d="M47.5 0v9M501.5 0v9"/><path class=y d="M73 10h3V7h-1V6h-1v1h-1zM88 10h3V7h-1V6h-1v1h-1zM149 10h3V7h-1V6h-1v1h-1z"/></svg>
<svg class=g><path d="M175 3H245V4H250V3H511V1l5 3.5-5 3.5V6H250V5H245V6H175z"/><path class=w d="M174.5 0v9M510.5 0v9"/><path class=y d="M234 10h3V7h-1V6h-1v1h-1z"/></svg>
<svg class=p><path d="M41 3H155V4H159V3H511V1l5 3.5-5 3.5V6H159V5H155V6H41z"/><path class=w d="M40.5 0v9M510.5 0v9"/><path class=y d="M78 10h3V7h-1V6h-1v1h-1zM84 10h3V7h-1V6h-1v1h-1zM147 10h3V7h-1V6h-1v1h-1z"/></svg>
<svg class=g><path d="M175 3H245V4H250V3H505V1l5 3.5-5 3.5V6H250V5H245V6H175z"/><path class=w d="M174.5 0v9M504.5 0v9"/><path class=y d="M234 10h3V7h-1V6h-1v1h-1z"/></svg>
<svg class=g><path d="M175 3H244V4H249V3H509V1l5 3.5-5 3.5V6H249V5H244V6H175z"/><path class=w d="M174.5 0v9M508.5 0v9"/><path class=y d="M234 10h3V7h-1V6h-1v1h-1z"/></svg>
<svg class=p><path d="M41 3H159V4H164V3H502V1l5 3.5-5 3.5V6H164V5H159V6H41z"/><path class=w d="M40.5 0v9M501.5 0v9"/><path class=y d="M78 10h3V7h-1V6h-1v1h-1zM86 10h3V7h-1V6h-1v1h-1zM147 10h3V7h-1V6h-1v1h-1z"/></svg>
<svg class=p><path d="M41 3H159V4H164V3H502V1l5 3.5-5 3.5V6H164V5H159V6H41z"/><path class=w d="M40.5 0v9M501.5 0v9"/><path class=y d="M78 10h3V7h-1V6h-1v1h-1zM86 10h3V7h-1V6h-1v1h-1zM147 10h3V7h-1V6h-1v1h-1z"/></svg>
<svg class=p><path d="M41 3H159V4H164V3H511V1l5 3.5-5 3.5V6H164V5H159V6H41z"/><path class=w d="M40.5 0v9M510.5 0v9"/><path class=y d="M78 10h3V7h-1V6h-1v1h-1zM86 10h3V7h-1V6h-1v1h-1zM145 10h3V7h-1V6h-1v1h-1z"/></svg>
<svg class=g><path d="M172 3H511V1l5 3.5-5 3.5V6H172z"/><path class=w d="M171.5 0v9M510.5 0v9"/></svg>
<svg class=g><path d="M175 3H243V4H248V3H511V1l5 3.5-5 3.5V6H248V5H243V6H175z"/><path class=w d="M174.5 0v9M510.5 0v9"/><path class=y d="M234 10h3V7h-1V6h-1v1h-1z"/></svg>
<svg class=g><path d="M175 3H243V4H249V3H477V1l5 3.5-5 3.5V6H249V5H243V6H175z"/><path class=w d="M174.5 0v9M476.5 0v9"/><path class=y d="M233 10h3V7h-1V6h-1v1h-1z"/></svg>
<svg class=g><path d="M175 3H244V4H249V3H500V1l5 3.5-5 3.5V6H249V5H244V6H175z"/><path class=w d="M174.5 0v9M499.5 0v9"/><path class=y d="M232 10h3V7h-1V6h-1v1h-1z"/></svg>
<svg class=p><path d="M41 3H159V4H164V3H502V1l5 3.5-5 3.5V6H164V5H159V6H41z"/><path class=w d="M40.5 0v9M501.5 0v9"/><path class=y d="M78 10h3V7h-1V6h-1v1h-1zM86 10h3V7h-1V6h-1v1h-1zM147 10h3V7h-1V6h-1v1h-1z"/></svg>
<svg class=p><path d="M48 3H164V4H168V3H500V1l5 3.5-5 3.5V6H168V5H164V6H48z"/><path class=w d="M47.5 0v9M499.5 0v9"/><path class=y d="M81 10h3V7h-1V6h-1v1h-1zM87 10h3V7h-1V6h-1v1h-1zM149 10h3V7h-1V6h-1v1h-1z"/></svg>
<svg class=g><path d="M217 3H281V4H287V3H490V1l5 3.5-5 3.5V6H287V5H281V6H217z"/><path class=w d="M216.5 0v9M489.5 0v9"/></svg>
<svg class=g><path d="M217 3H281V4H287V3H490V1l5 3.5-5 3.5V6H287V5H281V6H217z"/><path class=w d="M216.5 0v9M489.5 0v9"/></svg>
<svg class=g><path d="M175 3H243V4H248V3H505V1l5 3.5-5 3.5V6H248V5H243V6H175z"/><path class=w d="M174.5 0v9M504.5 0v9"/><path class=y d="M234 10h3V7h-1V6h-1v1h-1z"/></svg>
<svg class=c><path d="M319 3H511V1l5 3.5-5 3.5V6H319z"/><path class=w d="M318.5 0v9M510.5 0v9"/><path class=y d="M343 10h3V7h-1V6h-1v1h-1z"/></svg>
<svg class=g><path d="M175 3H245V4H250V3H509V1l5 3.5-5 3.5V6H250V5H245V6H175z"/><path class=w d="M174.5 0v9M508.5 0v9"/><path class=y d="M234 10h3V7h-1V6h-1v1h-1z"/></svg>
<svg class=g><path d="M175 3H245V4H250V3H509V1l5 3.5-5 3.5V6H250V5H245V6H175z"/><path class=w d="M174.5 0v9M508.5 0v9"/><path class=y d="M234 10h3V7h-1V6h-1v1h-1z"/></svg>
<svg class=p><path d="M48 3H158V4H162V3H511V1l5 3.5-5 3.5V6H162V5H158V6H48z"/><path class=w d="M47.5 0v9M510.5 0v9"/><path class=y d="M81 10h3V7h-1V6h-1v1h-1zM87 10h3V7h-1V6h-1v1h-1zM150 10h3V7h-1V6h-1v1h-1z"/></svg>
<svg class=g><path d="M175 3H247V4H251V3H500V1l5 3.5-5 3.5V6H251V5H247V6H175z"/><path class=w d="M174.5 0v9M499.5 0v9"/><path class=y d="M233 10h3V7h-1V6h-1v1h-1z"/></svg>
<svg class=g><path d="M175 3H249V4H253V3H500V1l5 3.5-5 3.5V6H253V5H249V6H175z"/><path class=w d="M174.5 0v9M499.5 0v9"/><path class=y d="M232 10h3V7h-1V6h-1v1h-1z"/></svg>
<svg class=g><path d="M175 3H249V4H253V3H502V1l5 3.5-5 3.5V6H253V5H249V6H175z"/><path class=w d="M174.5 0v9M501.5 0v9"/><path class=y d="M238 10h3V7h-1V6h-1v1h-1z"/></svg>
<svg class=p><path d="M48 3H158V4H162V3H511V1l5 3.5-5 3.5V6H162V5H158V6H48z"/><path class=w d="M47.5 0v9M510.5 0v9"/><path class=y d="M81 10h3V7h-1V6h-1v1h-1zM87 10h3V7h-1V6h-1v1h-1zM150 10h3V7h-1V6h-1v1h-1z"/></svg>
<svg class=g><path d="M175 3H243V4H248V3H500V1l5 3.5-5 3.5V6H248V5H243V6H175z"/><path class=w d="M174.5 0v9M499.5 0v9"/><path class=y d="M233 10h3V7h-1V6h-1v1h-1z"/></svg>
<svg class=g><path d="M175 3H245V4H250V3H505V1l5 3.5-5 3.5V6H250V5H245V6H175z"/><path class=w d="M174.5 0v9M504.5 0v9"/><path class=y d="M234 10h3V7h-1V6h-1v1h-1z"/></svg>
<svg class=p><path d="M13 3H27V4H32V3H500V1l5 3.5-5 3.5V6H32V5H27V6H13z"/><path class=w d="M12.5 0v9M499.5 0v9"/><path class=y d="M63 10h3V7h-1V6h-1v1h-1z"/></svg>
<svg class=p><path d="M25 3H35V4H40V3H147V4H151V3H511V1l5 3.5-5 3.5V6H151V5H147V6H40V5H35V6H25z"/><path class=w d="M24.5 0v9M510.5 0v9"/><path class=y d="M67 10h3V7h-1V6h-1v1h-1zM74 10h3V7h-1V6h-1v1h-1zM136 10h3V7h-1V6h-1v1h-1z"/></svg>
<svg class=p><path d="M70 3H174V4H178V3H500V1l5 3.5-5 3.5V6H178V5H174V6H70z"/><path class=w d="M69.5 0v9M499.5 0v9"/><path class=y d="M86 10h3V7h-1V6h-1v1h-1zM108 10h3V7h-1V6h-1v1h-1zM164 10h3V7h-1V6h-1v1h-1z"/></svg>
<svg class=g><path d="M175 3H245V4H250V3H505V1l5 3.5-5 3.5V6H250V5H245V6H175z"/><path class=w d="M174.5 0v9M504.5 0v9"/><path class=y d="M234 10h3V7h-1V6h-1v1h-1z"/></svg>
<svg class=g><path d="M175 3H245V4H250V3H505V1l5 3.5-5 3.5V6H250V5H245V6H175z"/><path class=w d="M174.5 0v9M504.5 0v9"/><path class=y d="M234 10h3V7h-1V6h-1v1h-1z"/></svg>
<svg class=g><path d="M175 3H243V4H249V3H477V1l5 3.5-5 3.5V6H249V5H243V6H175z"/><path class=w d="M174.5 0v9M476.5 0v9"/><path class=y d="M233 10h3V7h-1V6h-1v1h-1z"/></svg>
<svg class=g><path d="M175 3H243V4H249V3H477V1l5 3.5-5 3.5V6H249V5H243V6H175z"/><path class=w d="M174.5 0v9M476.5 0v9"/><path class=y d="M233 10h3V7h-1V6h-1v1h-1z"/></svg>
<svg class=g><path d="M175 3H245V4H250V3H500V1l5 3.5-5 3.5V6H250V5H245V6H175z"/><path class=w d="M174.5 0v9M499.5 0v9"/><path class=y d="M238 10h3V7h-1V6h-1v1h-1z"/></svg>
<svg class=g><path d="M175 3H500V1l5 3.5-5 3.5V6H175z"/><path class=w d="M174.5 0v9M499.5 0v9"/><path class=y d="M232 10h3V7h-1V6h-1v1h-1zM252 10h3V7h-1V6h-1v1h-1z"/></svg>
<svg class=p><path d="M41 3H159V4H164V3H511V1l5 3.5-5 3.5V6H164V5H159V6H41z"/><path class=w d="M40.5 0v9M510.5 0v9"/><path class=y d="M78 10h3V7h-1V6h-1v1h-1zM86 10h3V7h-1V6h-1v1h-1zM147 10h3V7h-1V6h-1v1h-1z"/></svg>
<svg class=p><path d="M13 3H27V4H32V3H500V1l5 3.5-5 3.5V6H32V5H27V6H13z"/><path class=w d="M12.5 0v9M499.5 0v9"/><path class=y d="M63 10h3V7h-1V6h-1v1h-1z"/></svg>
<svg class=g><path d="M175 3H243V4H249V3H500V1l5 3.5-5 3.5V6H249V5H243V6H175z"/><path class=w d="M174.5 0v9M499.5 0v9"/><path class=y d="M232 10h3V7h-1V6h-1v1h-1z"/></svg>
<svg class=p><path d="M41 3H157V4H162V3H477V1l5 3.5-5 3.5V6H162V5H157V6H41z"/><path class=w d="M40.5 0v9M476.5 0v9"/><path class=y d="M69 10h3V7h-1V6h-1v1h-1zM83 10h3V7h-1V6h-1v1h-1zM146 10h3V7h-1V6h-1v1h-1z"/></svg>
<svg class=g><path d="M175 3H245V4H250V3H509V1l5 3.5-5 3.5V6H250V5H245V6H175z"/><path class=w d="M174.5 0v9M508.5 0v9"/><path class=y d="M234 10h3V7h-1V6h-1v1h-1z"/></svg>
</div>
<pre>UniRef100_Q93ZG4
UniRef100_O23141
UniRef100_Q8H165
UniRef100_Q6VMQ4
UniRef100_Q9M618
UniRef100_Q6VMQ5
UniRef100_Q9SI64
UniRef100_Q9M617
UniRef100_O82475
UniRef100_B9H0Y5
UniRef100_Q76BK9
UniRef100_O64453
UniRef100_B3Y023
UniRef100_Q7Y235
UniRef100_B9RG52
UniRef100_P49726
UniRef100_UPI000..
UniRef100_Q71S28
UniRef100_O24549
UniRef100_A5B6D3
UniRef100_Q9M7K9
UniRef100_C3VPW9
UniRef100_Q9LDM9
UniRef100_Q5F307
UniRef100_Q2PEY8
UniRef100_Q2PEV1
UniRef100_Q2PEQ1
UniRef100_A7P7Z0
UniRef100_Q6RUQ1
UniRef100_Q9SCF0
UniRef100_Q43075
UniRef100_D0F0D6
UniRef100_B3FU07
UniRef100_O04429
UniRef100_Q96412
UniRef100_Q5R1Y5
UniRef100_Q39827
UniRef100_Q70KF5
UniRef100_A9YLB8
UniRef100_A3B825
UniRef100_Q9SNN0
UniRef100_Q3LUS5
UniRef100_C5Z3B3
UniRef100_O81168
UniRef100_O81173
UniRef100_O81164
UniRef100_O81163
UniRef100_O81172
UniRef100_O81167
UniRef100_O81171
UniRef100_O81169
UniRef100_O81165
UniRef100_O81159
UniRef100_Q53IH2
UniRef100_C7G0X0
UniRef100_O81182
UniRef100_O81179
UniRef100_O81160
UniRef100_O81175
UniRef100_O81184
UniRef100_O81181
UniRef100_O81180
UniRef100_O81177
UniRef100_O81176
UniRef100_O81174
UniRef100_O81178
UniRef100_O81162
UniRef100_Q50LD2
UniRef100_O81161
UniRef100_Q71SB4
UniRef100_Q2PEN0
UniRef100_A9S1H2
UniRef100_Q8GV34
UniRef100_A9RKF0
UniRef100_Q6YDQ9
UniRef100_Q6VMQ3
UniRef100_Q3M7K6
UniRef100_A3YU67
UniRef100_Q8YRP3
UniRef100_B9YFG0
UniRef100_B0JUQ5
UniRef100_A8YM58
UniRef100_B0CB40
UniRef100_A0ZD26
UniRef100_Q6ZA98
UniRef100_C7J624
UniRef100_Q14EL4
UniRef100_A9T053
UniRef100_B2IX23
UniRef100_C1A9B6
UniRef100_B6TVG5
UniRef100_B7ZYV4
UniRef100_B4FFQ7
UniRef100_A5GWM2
UniRef100_Q2JXW4
UniRef100_Q2JI66
UniRef100_Q8DHY6
UniRef100_Q7NE10
UniRef100_Q6MQU4
UniRef100_A3ILQ1
UniRef100_B7JW12
UniRef100_B5W8K5
UniRef100_C0LN13
UniRef100_Q7XRA1
UniRef100_Q31PF2
UniRef100_P22220
UniRef100_B8HUP8
UniRef100_A9B9E6
UniRef100_C7QT16
UniRef100_B1XQ14
UniRef100_D0CVL0
UniRef100_B9NR07
UniRef100_P74576
UniRef100_Q5N4R9
UniRef100_A0YL18
UniRef100_B8GQ46
UniRef100_A6FKE9
UniRef100_Q3AVV4
UniRef100_A5GPF0
UniRef100_B4B8K0
UniRef100_Q7U3S0
UniRef100_A4CXZ6
UniRef100_A3XFN0
UniRef100_P72587
UniRef100_C5VG73
UniRef100_B4VSF6
UniRef100_Q46I12
UniRef100_B7KL40
UniRef100_Q2P927
UniRef100_B2SHF8
UniRef100_Q061R7
UniRef100_Q05VE3
UniRef100_C1UMJ8
UniRef100_A2CDK1
UniRef100_UPI000..
UniRef100_Q3KIN5
UniRef100_D0CN14
UniRef100_Q8PFQ5
UniRef100_Q7V3M9
UniRef100_A3PA96
UniRef100_Q3AGN9
UniRef100_Q0I6J2
UniRef100_B4SM22
UniRef100_B2FKR0
UniRef100_A3Z3F6
UniRef100_Q7TUJ9
UniRef100_Q3BN94
UniRef100_B1X4D8
UniRef100_C6E3V4
UniRef100_B5EIW4
UniRef100_Q8P448
UniRef100_B0RXN6
UniRef100_A2BZG3
UniRef100_B9NZB3
UniRef100_Q116S0
UniRef100_O22594
UniRef100_A2BNH3
UniRef100_Q31DD8
UniRef100_B8DLV8
UniRef100_C9MNT6
UniRef100_B8L7W0
UniRef100_Q7VEG4
UniRef100_A8G243
UniRef100_B0NSN4
UniRef100_A4A0W8
UniRef100_A0A4W3
UniRef100_B5II45
UniRef100_A2BU00
UniRef100_Q39X78
UniRef100_Q3A2S0
UniRef100_B7SV18
UniRef100_B9M6H6
UniRef100_Q72F01
UniRef100_Q01P25
UniRef100_A4VI74
UniRef100_Q1K2O4
UniRef100_Q08PE8
UniRef100_A1VGG7
UniRef100_C0N929
UniRef100_Q5LVU3
UniRef100_B8IZ81
UniRef100_B0KLB9
UniRef100_C6MQ75
UniRef100_UPI000..
UniRef100_C5BTH9
UniRef100_B1J5T0
UniRef100_B7ALB8
UniRef100_B6WWP3
UniRef100_B3EAF3
UniRef100_C9PXB3
UniRef100_A1AS90
UniRef100_A5VY14
UniRef100_Q3R725
UniRef100_Q3R1F8
UniRef100_Q1N474
UniRef100_Q0F005
UniRef100_A7V056
UniRef100_B0U1H6
UniRef100_Q9PH02
UniRef100_Q88QC7
UniRef100_A5GB52
UniRef100_UPI000..
UniRef100_B5EQS4
UniRef100_UPI000..
UniRef100_Q48DK1
UniRef100_B2I6M1
UniRef100_Q87VU3
UniRef100_UPI000..
UniRef100_Q1D8R4
UniRef100_C3K6X4
UniRef100_B3CA92
UniRef100_Q4KIW2
UniRef100_Q1I4D6
UniRef100_B7BD78
UniRef100_A7AL66
UniRef100_A6L012
UniRef100_UPI000..
UniRef100_C1D7J5
UniRef100_C8QYL2
UniRef100_C7IG94
UniRef100_B5CUY5
UniRef100_A3WJS2
UniRef100_A3BTE7
UniRef100_A2YVH6
UniRef100_C1DLK7
UniRef100_Q8H9D0
UniRef100_UPI000..
UniRef100_Q4ZN61
UniRef100_Q2IJ37
UniRef100_Q21KB9
UniRef100_B8HZX7
UniRef100_B6YQA1
UniRef100_B4UBE9
UniRef100_B3PDQ1
UniRef100_A6VCU5
UniRef100_C7LQZ6
UniRef100_C1SLQ2
UniRef100_Q3JDL9
UniRef100_A3L350
UniRef100_Q9HUX1
UniRef100_Q1NRV2
UniRef100_Q1NK86
UniRef100_C8NA77
UniRef100_B9XIQ3
UniRef100_B3JF49
UniRef100_C0QEE7
UniRef100_Q315M4
UniRef100_B3DZ69
UniRef100_A4XQ79</pre>
<div class="t n" style="left:9px;top:2805px">Large gaps:</div>
<svg style="position:absolute;left:0;top:2800px;width:640px;height:19px"><path style="fill:#ffff80" d="M80 15h5v-5h-1V8h-3v2h-1z"/><path style="fill:#00c4c4" d="M155 11h6v1h-6zM439 10h17v3h-17z"/><path style="fill:#888" d="M438 7h1v8h-1zM456 7h1v8h-1z"/></svg>
<div class="t n" style="left:88px;top:2805px">(in Query)/</div>
<div class="t n" style="left:166px;top:2805px">(in Subject)</div>
<div class="t n" style="left:460px;top:2805px">=100char.</div>
</body></html>
